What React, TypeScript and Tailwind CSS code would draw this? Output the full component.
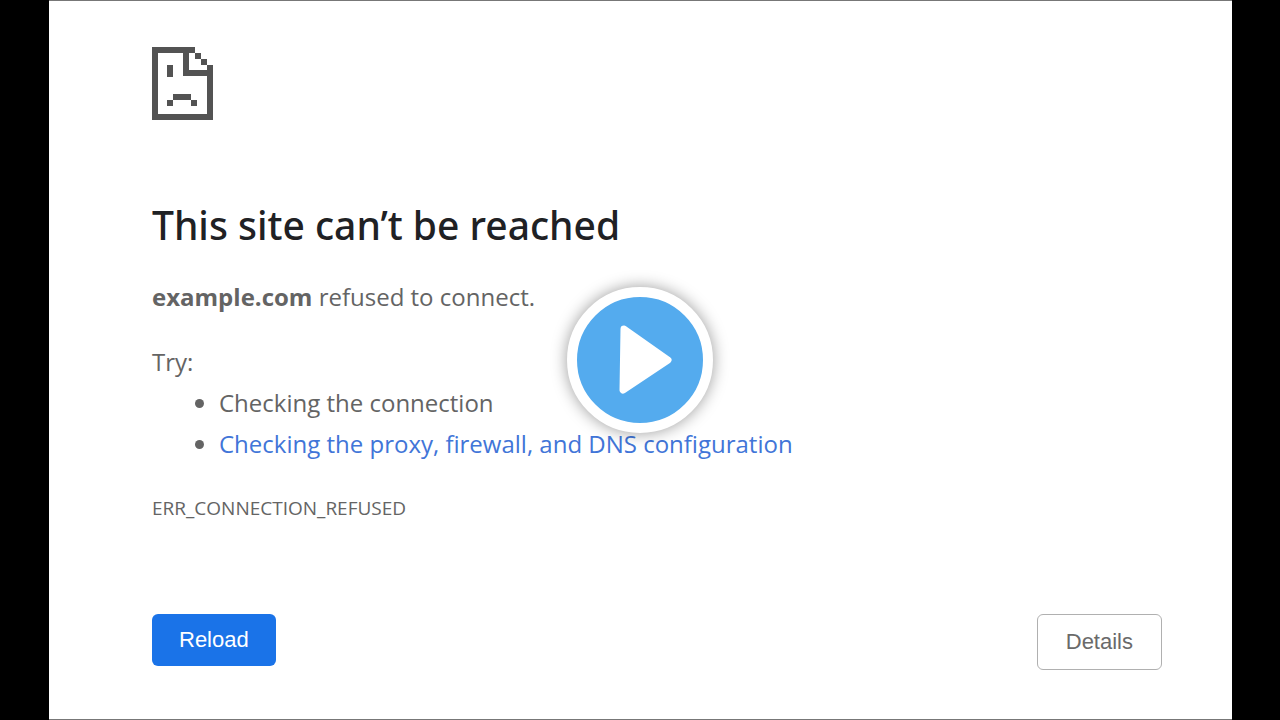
const SadPageIcon = () => (
  <svg
    className="h-[73px] w-[61px] text-[#535353]"
    viewBox="0 0 61 73"
    fill="currentColor"
    aria-hidden="true"
  >
    {/* sheet outline with the folded corner */}
    <path d="M0 0H43V6H37V23H61V73H0ZM6 6V67H55V29H31V6Z" fillRule="evenodd" />
    <path d="M43 6h6v6h-6zM49 12h6v6h-6zM55 18h6v6h-6z" />
    {/* eye and mouth */}
    <path d="M15 18h6v12h-6zM21 47h18v6H21zM15 53h6v6h-6zM39 53h6v6h-6z" />
  </svg>
);

const PlayButton = () => (
  <button
    type="button"
    aria-label="Play"
    className="absolute top-1/2 left-1/2 flex size-[146px] -translate-x-1/2 -translate-y-1/2 items-center justify-center rounded-full border-10 border-white bg-[#54abee] shadow-[0_0_16px_rgba(0,0,0,0.4)]"
  >
    <svg className="size-full" viewBox="0 0 126 126" aria-hidden="true">
      <path
        d="M47 32L91 63L46 93Z"
        fill="#fff"
        stroke="#fff"
        strokeWidth="7"
        strokeLinejoin="round"
      />
    </svg>
  </button>
);

const App = () => {
  return (
    <div className="relative flex min-h-screen bg-black pr-12 pl-[49px]">
      <main className="flex w-full flex-col border-y border-[#777777] bg-white pt-[46px] pr-[70px] pb-[49px] pl-[103px] font-['Segoe_UI','Open_Sans',sans-serif] text-2xl leading-10 text-[#646464]">
        <SadPageIcon />
        <h1 className="mt-[81px] font-['Segoe_UI','Noto_Sans',sans-serif] text-[39px] leading-12 font-medium text-[#202124]">
          This site can’t be reached
        </h1>
        <p className="mt-7">
          <strong className="font-bold">example.com</strong> refused to connect.
        </p>
        <p className="mt-[25px]">Try:</p>
        <ul className="list-disc pl-[67px] leading-[41px]">
          <li>Checking the connection</li>
          <li>
            <a href="#buttons" className="text-[#4175d8]">
              Checking the proxy, firewall, and DNS configuration
            </a>
          </li>
        </ul>
        <p className="mt-6 text-[19px] leading-10">
          ERR_CONNECTION_REFUSED
        </p>
        <div
          id="buttons"
          className="mt-auto flex items-start justify-between font-['Liberation_Sans',sans-serif] text-[22px] leading-[52px]"
        >
          <button
            type="button"
            className="rounded-md bg-[#1a73e8] px-[27px] text-white"
          >
            Reload
          </button>
          <button
            type="button"
            className="rounded-md border border-[#b0b0b0] px-7 py-px text-[#6a6a6a]"
          >
            Details
          </button>
        </div>
      </main>
      <PlayButton />
    </div>
  );
};

export default App;
